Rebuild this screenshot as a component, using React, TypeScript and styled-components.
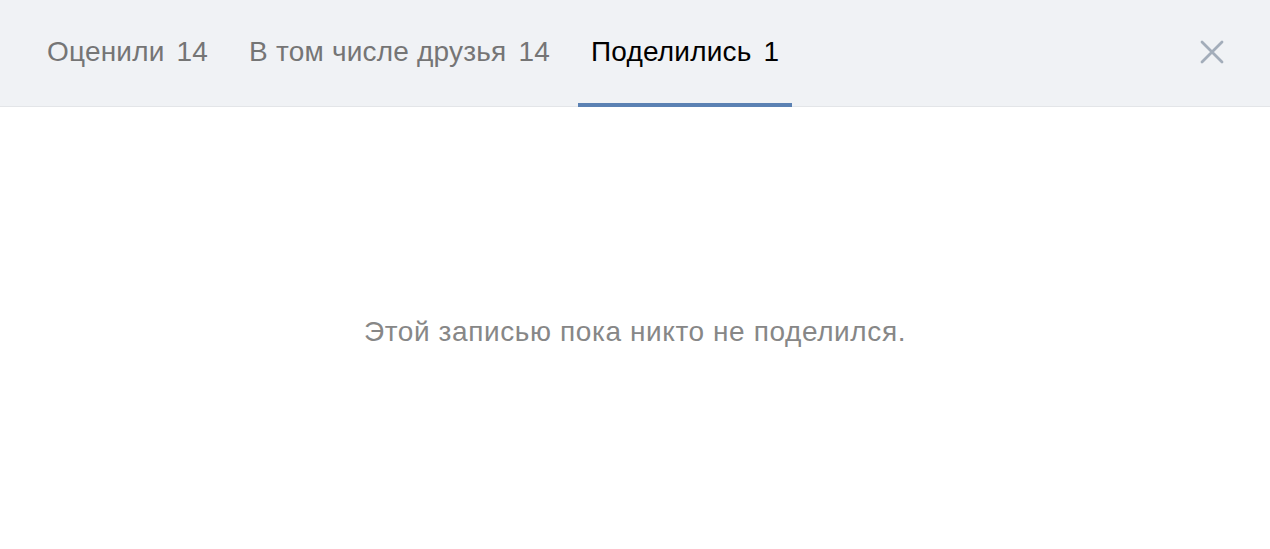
import React from "react";
import styled, { createGlobalStyle } from "styled-components";

const Global = createGlobalStyle`
  html, body { margin: 0; padding: 0; background: #fff; }
  body { font-family: "Liberation Sans", Arial, sans-serif; }
`;

const Page = styled.div`
  width: 1270px;
  height: 549px;
  display: flex;
  flex-direction: column;
  background: #fff;
`;

const Header = styled.div`
  height: 107px;
  box-sizing: border-box;
  background: #f0f2f5;
  border-bottom: 1px solid #e3e5e8;
  display: flex;
  align-items: stretch;
  padding: 0 34px;
`;

const Tabs = styled.div`
  display: flex;
  gap: 15px;
  flex: 1;
`;

const Tab = styled.div<{ $active?: boolean }>`
  position: relative;
  display: flex;
  align-items: center;
  padding: 0 13px 2px;
  font-size: 28px;
  letter-spacing: 0.2px;
  color: ${(p) => (p.$active ? "#000" : "#757575")};
  white-space: nowrap;
  &::after {
    content: "";
    display: ${(p) => (p.$active ? "block" : "none")};
    position: absolute;
    left: 0;
    right: 0;
    bottom: -1px;
    height: 4px;
    background: #5b81b3;
  }
`;

const Count = styled.span`
  margin-left: 12px;
`;

const Close = styled.button`
  border: 0;
  background: none;
  padding: 0;
  margin: 0 12px 2px 0;
  align-self: center;
  width: 24px;
  height: 24px;
  display: flex;
  align-items: center;
  justify-content: center;
  cursor: pointer;
`;

const Body = styled.div`
  flex: 1;
  display: flex;
  align-items: center;
  justify-content: center;
  padding-top: 8px;
`;

const Empty = styled.div`
  font-size: 28px;
  letter-spacing: 0.6px;
  color: #878787;
`;

export default function App() {
  return (
    <Page>
      <Global />
      <Header>
        <Tabs>
          <Tab>
            Оценили<Count>14</Count>
          </Tab>
          <Tab>
            В том числе друзья<Count>14</Count>
          </Tab>
          <Tab $active>
            Поделились<Count>1</Count>
          </Tab>
        </Tabs>
        <Close aria-label="Закрыть">
          <svg width="24" height="24" viewBox="0 0 24 24">
            <path
              d="M2 2 L22 22 M22 2 L2 22"
              stroke="#a3adba"
              strokeWidth="2.8"
              strokeLinecap="round"
              fill="none"
            />
          </svg>
        </Close>
      </Header>
      <Body>
        <Empty>Этой записью пока никто не поделился.</Empty>
      </Body>
    </Page>
  );
}
